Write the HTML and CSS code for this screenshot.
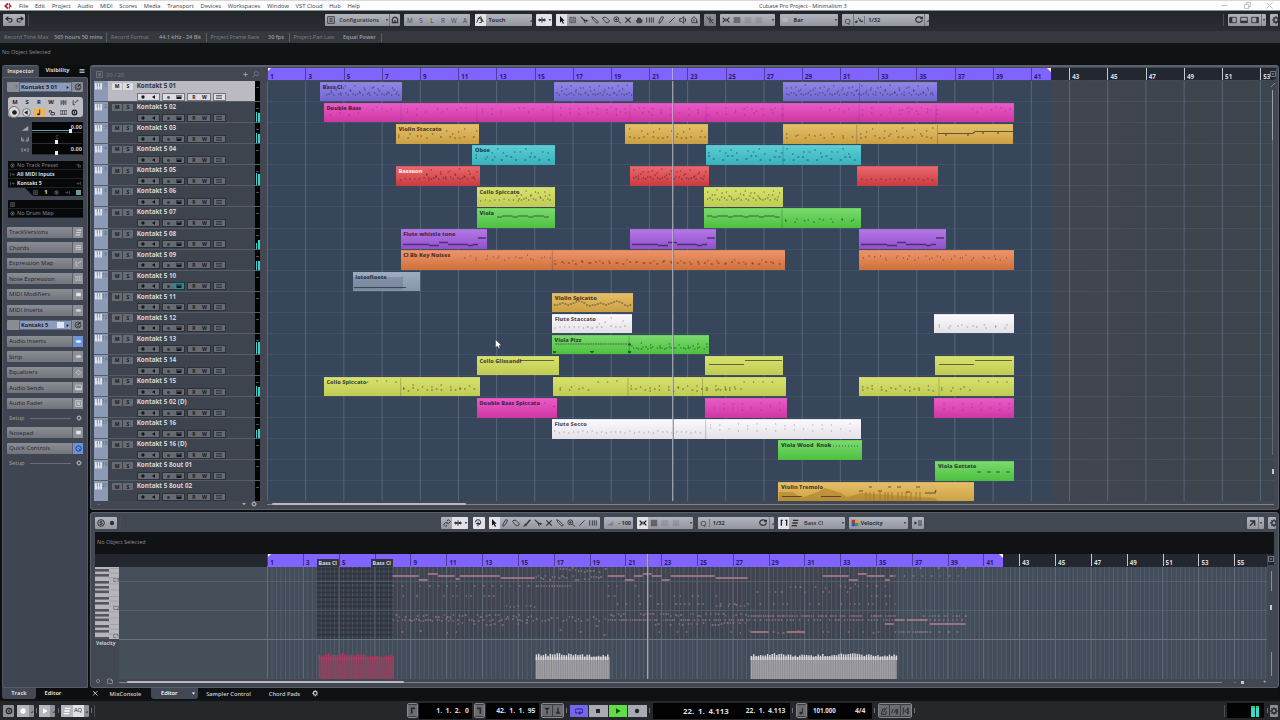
FILE: index.html
```html
<!DOCTYPE html>
<html lang="en">
<head>
    <meta charset="utf-8">
    <title>Cubase Pro Project - Minimalism 3</title>
    <link rel="stylesheet" href="styles.css">
</head>
<body>
<div class="app">

    <div class="menubar">
        <i class="logo" data-icon="logo"></i>
        <span>File</span><span>Edit</span><span>Project</span><span>Audio</span><span>MIDI</span><span>Scores</span><span>Media</span><span>Transport</span><span>Devices</span><span>Workspaces</span><span>Window</span><span>VST Cloud</span><span>Hub</span><span>Help</span>
        <b class="title">Cubase Pro Project - Minimalism 3</b>
        <div class="winbtns"><i data-icon="min"></i><i data-icon="restore"></i><i data-icon="close"></i></div>
    </div>

    <div class="toolbar">
        <div class="tb-left">
            <div class="grp undo"><i data-icon="undo"></i><i data-icon="redo"></i></div>
            <div class="sep"></div>
        </div>
        <div class="grp w75"><i data-icon="square"></i><span class="lbl grow">Configurations</span><i class="tiny" data-icon="down"></i><i class="bl" data-icon="home"></i></div>
        <div class="grp w66 letters"><span>M</span><span>S</span><span>L</span><span>R</span><span>W</span><span>A</span></div>
        <div class="grp w57"><i class="on" data-icon="auto"></i><span class="lbl grow bold">Touch</span><i class="tiny" data-icon="corner"></i></div>
        <div class="grp w16 on"><i data-icon="scroll"></i><i class="tiny" data-icon="down"></i></div>
        <div class="grp w144 tools"><i class="on" data-icon="arrow"></i><i data-icon="range"></i><i data-icon="split"></i><i data-icon="pencil"></i><i data-icon="erase"></i><i data-icon="zoom"></i><i data-icon="x"></i><i data-icon="hand"></i><i data-icon="warp"></i><i data-icon="pen"></i><i data-icon="line"></i><i data-icon="play2"></i><i data-icon="bucket"></i></div>
        <div class="grp w12 dim"><i data-icon="snap"></i></div>
        <div class="grp w55"><i data-icon="xx"></i><i data-icon="bars"></i><i class="faint" data-icon="bars"></i><i class="faint" data-icon="grid"></i><span class="grow"></span><i class="tiny" data-icon="down"></i></div>
        <div class="grp w59"><i class="faint" data-icon="block"></i><span class="lbl grow bold">Bar</span><i class="tiny" data-icon="down"></i></div>
        <div class="grp w87"><span class="q">Q</span><i class="bl" data-icon="quant"></i><span class="lbl grow bl bold">1/32</span><i data-icon="reload"></i><i class="tiny bl" data-icon="corner"></i></div>
        <div class="spacer"></div>
        <div class="sep"></div>
        <div class="grp w38"><i data-icon="zl"></i><i data-icon="zb"></i><i data-icon="zr"></i><i class="tiny bl" data-icon="down"></i></div>
        <div class="grp w8"><i data-icon="gear"></i></div>
    </div>

    <div class="statusline">
        <span style="width:50px">Record Time Max</span><b style="width:52px">365 hours 50 mins</b>
        <span class="sl" style="width:53px">Record Format</span><b style="width:46.5px">44.1 kHz - 24 Bit</b>
        <span class="sl" style="width:62.5px">Project Frame Rate</span><b style="width:20.5px">30 fps</b>
        <span class="sl" style="width:54.5px">Project Pan Law</span><b style="width:37.5px">Equal Power</b>
        <span class="sl"></span>
    </div>
    <div class="infoline">No Object Selected</div>

    <div class="main">
        <div class="left">
            <div class="tabs"><span class="active">Inspector</span><span>Visibility</span><i data-icon="menu"></i></div>
            <div class="inspector">
                <div class="namebar"><span class="num">1</span><span class="nm">Kontakt 5 01<i data-icon="right"></i></span><i data-icon="edit"></i></div>
                <div class="pad">
                    <div><i class="s">M</i><i class="s">S</i><i class="s gap">R</i><i class="s">W</i><i data-icon="lanes"></i><i data-icon="auto2"></i></div>
                    <div><i class="round" data-icon="rec"></i><i class="round sm" data-icon="spk"></i><i class="orange" data-icon="note"></i><i data-icon="lock"></i><i data-icon="cells"></i><i data-icon="ring"></i></div>
                </div>
                <div class="faders">
                    <div class="ficons"><i data-icon="ramp"></i><i data-icon="pan"></i><i data-icon="delay"></i></div>
                    <div class="fbox">
                        <div><b>0.00</b><u class="vol"></u></div>
                        <div><em>C</em><u></u></div>
                        <div><b>0.00</b><u></u></div>
                    </div>
                </div>
                <div class="routing">
                    <div class="off"><i data-icon="ring"></i>No Track Preset<i class="end" data-icon="lock"></i></div>
                    <div><i data-icon="io"></i>All MIDI Inputs</div>
                    <div><i data-icon="io"></i>Kontakt 5<i class="end" data-icon="out"></i></div>
                </div>
                <div class="channel"><i data-icon="square"></i><b>1</b><i data-icon="ring"></i><i class="lit" data-icon="out"></i><u></u></div>
                <div class="routing drum">
                    <div class="off"><i data-icon="square"></i></div>
                    <div class="off"><i data-icon="ring"></i>No Drum Map</div>
                </div>
                <div class="sections" id="sections"></div>
            </div>
            <div class="tabs bottom"><span class="active">Track</span><span>Editor</span></div>
        </div>

        <div class="right">
            <div class="project">
                <div class="tracklist">
                    <div class="tl-head"><i data-icon="square"></i><span>20 / 20</span><i class="plus" data-icon="plus"></i><i data-icon="search"></i></div>
                    <div class="rows" id="tracks"></div>
                    <div class="tl-foot"><span>-</span><i data-icon="down"></i><i data-icon="gear"></i></div>
                </div>
                <div class="arrange">
                    <div class="ruler" id="ruler"></div>
                    <div class="lanes" id="lanes"></div>
                    <div class="hscroll"><span></span></div>
                </div>
                <div class="vscroll"><i data-icon="dropbox"></i><i data-icon="line"></i><span></span><u></u></div>
            </div>

            <div class="editor">
                <div class="toolbar ed">
                    <div class="tb-left">
                        <div class="grp"><i data-icon="solo"></i><i data-icon="dot"></i></div>
                        <div class="sep"></div>
                    </div>
                    <div class="grp w27"><i data-icon="link"></i><i class="on" data-icon="scroll"></i><i class="tiny on" data-icon="down"></i></div>
                    <div class="grp w12 on"><i data-icon="speaker"></i></div>
                    <div class="grp w111 tools"><i class="on" data-icon="arrow"></i><i data-icon="pen"></i><i data-icon="erase"></i><i data-icon="brush"></i><i data-icon="split"></i><i data-icon="x"></i><i data-icon="pencil"></i><i data-icon="zoom"></i><i data-icon="line"></i><i data-icon="warp"></i></div>
                    <div class="grp w29"><i class="faint" data-icon="ramp"></i><span class="lbl grow bold rt">- 100</span><i class="tiny" data-icon="updn"></i></div>
                    <div class="grp w56"><i class="on" data-icon="xx"></i><i data-icon="grid"></i><i class="faint" data-icon="bars"></i><i class="faint" data-icon="grid"></i><span class="grow"></span><i class="tiny" data-icon="down"></i></div>
                    <div class="grp w76"><span class="q">Q</span><span class="lbl grow bl bold">1/32</span><i data-icon="reload"></i><i class="tiny bl" data-icon="corner"></i></div>
                    <div class="grp w67"><i class="on" data-icon="parts"></i><i data-icon="layers"></i><span class="lbl grow pl">Bass Cl</span><i class="tiny" data-icon="down"></i></div>
                    <div class="grp w59"><i data-icon="colors"></i><span class="lbl grow tight">Velocity</span><i class="tiny" data-icon="down"></i></div>
                    <div class="grp w12"><i data-icon="indent"></i></div>
                    <div class="spacer"></div>
                    <div class="sep"></div>
                    <div class="grp w17"><i data-icon="popout"></i><i class="tiny bl" data-icon="down"></i></div>
                    <div class="grp w8"><i data-icon="gear"></i></div>
                </div>
                <div class="ed-info">No Object Selected</div>
                <div class="ed-body">
                    <div class="keys-col">
                        <div class="keys-top"></div>
                        <div class="keys" id="keys"></div>
                        <div class="vel-label">Velocity</div>
                        <div class="keys-foot"><i data-icon="diamond"></i><i data-icon="page"></i></div>
                    </div>
                    <div class="ed-canvas">
                        <div class="ruler ed-ruler" id="edRuler"></div>
                        <div class="roll" id="roll"></div>
                        <div class="hscroll wide"><span></span><em>- <u></u> +</em></div>
                    </div>
                    <div class="vscroll short"><i data-icon="dropbox"></i><span></span><u></u><span class="low"></span></div>
                </div>
            </div>

            <div class="zonetabs">
                <i data-icon="x"></i><span class="t1">MixConsole</span><span class="active">Editor<i data-icon="down"></i></span><span class="t3">Sampler Control</span><span class="t4">Chord Pads</span><i data-icon="gear"></i>
            </div>
        </div>
    </div>

    <div class="transport">
        <div class="tp-left">
            <div class="tb g11"><i data-icon="ring"></i></div>
            <div class="tb g17"><i class="w" data-icon="rec"></i><i class="tiny" data-icon="corner"></i></div><s></s>
            <div class="tb g16"><i class="w" data-icon="play"></i><i class="tiny" data-icon="corner"></i></div><s></s>
            <div class="tb g28"><i class="w" data-icon="layers"></i><span>AQ</span><i class="tiny" data-icon="corner"></i></div><s></s><s class="tall"></s>
        </div>
        <div class="dark g11"><i data-icon="flagr"></i></div>
        <div class="time g53">1.&ensp;1.&ensp;2.&ensp;&thinsp;0</div>
        <div class="dark g11"><i data-icon="flag"></i></div>
        <div class="time g53">42.&ensp;1.&ensp;1.&ensp;95</div>
        <div class="dark g23"><i data-icon="punchin"></i><i data-icon="punchout"></i></div><s></s>
        <div class="play"><i class="cyc" data-icon="cycle"></i><i data-icon="stop"></i><i class="go" data-icon="play"></i><i data-icon="dot"></i></div><s></s>
        <div class="time g138"><span class="big">22.&ensp;1.&ensp;4.113</span><span class="sub">22.&ensp;1.&ensp;4.113</span></div><s></s>
        <div class="dark g11"><i data-icon="note"></i></div>
        <div class="time g66"><span class="tempo">101.000</span><span class="sig">4/4</span></div><s></s>
        <div class="dark g34"><i data-icon="metro"></i><i data-icon="count"></i><i data-icon="click"></i></div><s></s>
        <div class="spacer"></div>
        <s class="tall"></s>
        <div class="outmeter"><u></u><u></u></div><s></s>
        <div class="tb g8"><i data-icon="gear"></i></div>
    </div>
</div>
<script src="script.js"></script>
</body>
</html>
```

FILE: styles.css
```css
* {
    box-sizing: border-box;
}

body {
    margin: 0;
    background: #0d0e10;
    font-family: "Open Sans", "Noto Sans", sans-serif;
    font-size: 5.8px;
    color: #c9ccd2;
    overflow: hidden;
}

i, em, u, s {
    font-style: normal;
    text-decoration: none;
}

i {
    display: flex;
    align-items: center;
    justify-content: center;
    flex: none;
}

i svg {
    width: 8px;
    height: 8px;
    display: block;
}

.app {
    width: 1280px;
    height: 720px;
    display: flex;
    flex-direction: column;
    white-space: nowrap;
}

.spacer, .grow {
    flex: 1;
}

/* menu */
.menubar {
    height: 11px;
    flex: none;
    background: #fdfdfd;
    border-top: 1px solid #d8d8da;
    border-bottom: 1px solid #8b8c90;
    color: #3c3c40;
    display: flex;
    align-items: center;
    font-size: 5.8px;
    position: relative;
}

.menubar span {
    margin-right: 6.7px;
}

.logo {
    width: 15px;
    margin-right: 4px;
}

.title {
    position: absolute;
    left: 759px;
    font-weight: normal;
    font-size: 5.5px;
}

.winbtns {
    margin-left: auto;
    display: flex;
    gap: 15.5px;
    padding-right: 7px;
    color: #aaa;
}

.winbtns svg {
    width: 7px;
    height: 7px;
}

/* toolbars */
.toolbar {
    height: 20px;
    flex: none;
    background: linear-gradient(#23262b, #2a2d35);
    display: flex;
    align-items: center;
    gap: 4.2px;
    padding: 0 2px 2px 3px;
}

.tb-left {
    display: flex;
    width: 318px;
    gap: 3px;
}

.grp {
    height: 12px;
    display: flex;
    align-items: center;
    flex: none;
    background: linear-gradient(#b3b5be, #94969f);
    color: #2e3036;
    border-radius: 1px;
    overflow: hidden;
}

.grp i {
    width: 11px;
    height: 12px;
}

.grp .tiny {
    width: 5px;
}

.grp .tiny svg {
    width: 4px;
    height: 4px;
}

.grp .on, .grp.on {
    background: #e2e2e8;
    color: #141416;
}

.grp .bl {
    border-left: 1px solid #747680;
}

.grp .lbl {
    padding-left: 3px;
    font-weight: 600;
    font-size: 5.6px;
}

.grp .bold {
    font-weight: 700;
}

.grp .lbl.rt {
    text-align: right;
    padding-right: 2px;
}

.grp .lbl.pl {
    padding-left: 4px;
}

.grp .lbl.tight {
    padding-left: 0;
    font-weight: 700;
}

.grp .q {
    width: 11px;
    text-align: center;
    font-size: 8px;
}

.faint {
    opacity: .25;
}

.dim {
    opacity: .75;
}

.letters span {
    width: 11px;
    text-align: center;
    font-size: 6.3px;
    color: #44464e;
}

.sep {
    width: 1px;
    height: 12px;
    background: #4a4d55;
}

.w8 { width: 8px; }
.w12 { width: 12px; }
.w16 { width: 16px; }
.w17 { width: 17px; }
.w27 { width: 27px; }
.w29 { width: 29px; }
.w38 { width: 38px; }
.w55 { width: 55px; }
.w56 { width: 56px; }
.w57 { width: 57.5px; }
.w59 { width: 58.5px; }
.w66 { width: 66px; }
.w67 { width: 67px; }
.w75 { width: 75px; }
.w76 { width: 76px; }
.w87 { width: 87px; }
.w111 { width: 111px; }
.w144 { width: 143.500px; }

.statusline {
    height: 12px;
    flex: none;
    background: #35383d;
    display: flex;
    align-items: center;
    padding-left: 4px;
    font-size: 5.5px;
    color: #7e8188;
}

.statusline span, .statusline b {
    flex: none;
}

.statusline b {
    font-weight: 600;
    color: #9b9ea4;
}

.statusline .sl {
    height: 9px;
    line-height: 8px;
    border-left: 1px solid #5a5d63;
    padding-left: 4px;
}

.infoline {
    height: 22px;
    flex: none;
    background: #111213;
    color: #8d8f94;
    font-size: 5.5px;
    line-height: 19px;
    padding-left: 2px;
}

.main {
    height: 634px;
    flex: none;
    display: flex;
    gap: 2px;
    padding: 0 1px 0 2px;
}

/* left zone */
.left {
    width: 86px;
    display: flex;
    flex-direction: column;
}

.tabs {
    height: 12px;
    display: flex;
    font-size: 5.6px;
    font-weight: 700;
    color: #d6d8dc;
    background: #0d0e10;
}

.tabs span {
    width: 37px;
    text-align: center;
    line-height: 11px;
}

.tabs .active {
    background: #424955;
    border-radius: 3px 3px 0 0;
    border-top: 1px solid #5b616d;
}

.tabs.bottom {
    height: 11px;
}

.tabs.bottom span {
    width: 34px;
    line-height: 11px;
}

.tabs.bottom .active {
    border-radius: 0 0 3px 3px;
    border-top: 0;
}

.tabs i {
    width: 8px;
    margin-left: auto;
    margin-right: 2px;
}

.tabs i svg {
    width: 6px;
    height: 6px;
}

.inspector {
    flex: 1;
    background: #404651;
    border: 1px solid #555b67;
    border-radius: 0 2px 0 0;
    padding: 4px 4px 0 4px;
}

.namebar {
    display: flex;
    height: 10px;
    background: #8b8d95;
    border-radius: 1px;
    color: #1e222c;
    align-items: center;
}

.namebar .num {
    width: 12px;
    text-align: right;
    padding-right: 1px;
    color: #555;
}

.namebar .nm {
    flex: 1;
    height: 10px;
    line-height: 8px;
    font-size: 5.8px;
    font-weight: 700;
    background: #8d9cba;
    border: 1px solid #5e6a82;
    padding-left: 1px;
    display: flex;
}

.namebar .nm i {
    width: 7px;
    margin-left: auto;
}

.namebar .nm svg {
    width: 5px;
    height: 5px;
}

.namebar i {
    width: 11px;
}

.pad {
    margin: 5px 0 0 1px;
    height: 20px;
    background: #bdbdc6;
    border-radius: 3px;
    color: #1d1e22;
}

.pad div {
    display: flex;
    height: 10px;
    align-items: center;
    justify-content: space-between;
    padding: 0 3px 0 2px;
}

.pad i {
    width: 10px;
    height: 9px;
}

.pad .s {
    font-size: 5.8px;
    font-weight: 700;
}

.pad svg {
    width: 7px;
    height: 7px;
}

.pad .round {
    width: 12px;
    height: 12px;
    border: 1px solid #777;
    border-radius: 50%;
    background: #d6d6dc;
    margin-left: -2px;
}

.pad .round.sm {
    width: 9px;
    height: 9px;
    margin: 0;
}

.pad .orange {
    background: #e9b45c;
    width: 12px;
}

.faders {
    display: flex;
    margin-top: 5px;
    height: 33px;
}

.ficons {
    width: 25px;
    color: #a0a3aa;
    padding-left: 10px;
}

.ficons i {
    height: 11px;
}

.fbox {
    flex: 1;
    background: #050506;
    padding-right: 1px;
}

.fbox div {
    height: 11px;
    position: relative;
    border-bottom: 1px solid #2c2e33;
    text-align: right;
    line-height: 10px;
    color: #c9cbd0;
}

.fbox b {
    font-size: 5.6px;
}

.fbox em {
    display: block;
    text-align: center;
    font-size: 5px;
    line-height: 9px;
    color: #777;
}

.fbox u {
    position: absolute;
    left: 23px;
    bottom: -1px;
    width: 3px;
    height: 4px;
    background: #eee;
}

.fbox .vol {
    left: 37px;
}

.fbox .vol::before {
    content: "";
    position: absolute;
    left: -37px;
    top: 1px;
    width: 37px;
    height: 1px;
    background: #4fa9c0;
}

.routing {
    margin: 6px 0 0 1px;
    background: #07080a;
    color: #d9dbdf;
    font-weight: 700;
    font-size: 5.1px;
}

.routing div {
    height: 9px;
    display: flex;
    align-items: center;
    border-bottom: 1px solid #1f2126;
}

.routing i {
    width: 9px;
    color: #777a80;
}

.routing svg, .channel svg {
    width: 5px;
    height: 5px;
}

.routing .end {
    margin-left: auto;
}

.routing .off {
    color: #6f7278;
    font-weight: 600;
    font-size: 5.4px;
}

.channel {
    height: 8px;
    margin-left: 18px;
    background: #07080a;
    clip-path: polygon(0 0, 100% 0, 100% 100%, 8px 100%);
    display: flex;
    align-items: center;
    justify-content: space-between;
    padding: 0 2px 0 8px;
    color: #777a80;
}

.channel b {
    color: #e8e8ea;
}

.channel u {
    width: 5px;
    height: 5px;
    background: #6d9c98;
}

.routing.drum {
    margin-top: 4px;
    margin-bottom: 6.5px;
}

.sections > div {
    height: 15.55px;
    display: flex;
    align-items: center;
}

.sec {
    height: 11px;
    flex: 1;
    display: flex;
    align-items: center;
    background: linear-gradient(#8b8d95, #72747c);
    border-radius: 1px;
    color: #212329;
    font-size: 6px;
    padding-left: 2px;
}

.sec i {
    margin-left: auto;
    width: 11px;
    height: 11px;
    color: #d2d4d8;
    background: #8d8f96;
    border-left: 1px solid #5d5f67;
}

.sec .blue {
    background: #6c93d8;
    color: #e8efff;
}

.sec svg {
    width: 7px;
    height: 7px;
}

.sections .setup {
    height: 14px;
    color: #a1a4aa;
    gap: 5px;
    padding: 0 1px 0 2px;
}

.setup::before {
    content: "Setup";
}

.setup svg {
    width: 6px;
    height: 6px;
}

.setup u {
    flex: 1;
    height: 1px;
    background: #6a6e76;
}

.sections .namebar {
    height: 10px;
    margin: 2.7px 0 2.8px;
}

.sections .nm {
    font-size: 5.6px;
}

.sections .blk {
    margin: 1px 0 0 auto;
    width: 6px;
    height: 6px;
    background: #dfe6f2;
}

.sections .nm .blk + i {
    margin-left: 0;
}

/* right zone */
.right {
    flex: 1;
    min-width: 0;
    display: flex;
    flex-direction: column;
}

.project {
    height: 445px;
    flex: none;
    display: flex;
    background: #424751;
    border: 1px solid #5b616c;
    border-top-width: 2px;
    border-radius: 3px;
    padding: 1px 0 0 3px;
}

.tracklist {
    width: 166.3px;
    flex: none;
}

.tl-head {
    height: 13px;
    display: flex;
    align-items: center;
    color: #777c86;
    gap: 3px;
    padding: 0 1px 0 2px;
}

.tl-head span {
    flex: 1;
}

.tl-head .plus {
    color: #a8abb2;
}

.tl-head svg {
    width: 7px;
    height: 7px;
}

.rows {
    height: 419.7px;
    overflow: hidden;
}

.track {
    height: 21.09px;
    display: flex;
    border-bottom: 1px solid #565b66;
    background: #3e444e;
}

.tnum {
    width: 14px;
    background: #8c9ab5;
    color: #5b6780;
    display: flex;
    font-size: 4.8px;
    line-height: 9px;
    justify-content: space-between;
    padding-right: 1px;
}

.tnum i {
    height: 10px;
    width: 8px;
    color: #e1e6ef;
}

.tnum svg {
    width: 7px;
    height: 7px;
}

.ms {
    width: 28.7px;
    padding: 1.5px 0 0 4px;
    display: flex;
    gap: 1px;
}

.ms i, .ctl i {
    height: 7.5px;
    width: 10px;
    background: #666a73;
    color: #15171b;
    font-size: 5px;
    font-weight: 700;
}

.tbody {
    flex: 1;
}

.tname {
    font-size: 6.3px;
    line-height: 9.5px;
    height: 11.5px;
    font-weight: 700;
    color: #d3d5da;
}

.ctl {
    display: flex;
    gap: 2px;
}

.ctl span {
    display: flex;
    border: 1px solid #2c3038;
}

.ctl i {
    height: 6px;
    width: 10.7px;
}

.ctl svg {
    width: 6px;
    height: 6px;
}

.ctl .teal {
    background: #1e8f9b;
}

.meter {
    width: 5px;
    background: #020303;
    display: flex;
    align-items: flex-end;
    gap: 1px;
    justify-content: center;
    position: relative;
}

.meter::before {
    content: "";
    position: absolute;
    top: 6px;
    left: 1px;
    width: 3px;
    height: 1px;
    background: #4b5157;
}

.meter u {
    width: 1.6px;
    background: #2fd5cf;
}

.track.sel {
    background: #bbb9c2;
}

.sel .tname {
    color: #33353b;
}

.sel .ms i, .sel .ctl i {
    background: #dddce2;
}

.sel .ctl span {
    border-color: #75757e;
}

.tl-foot {
    height: 7px;
    display: flex;
    align-items: center;
    color: #a2a5ac;
    gap: 4px;
    padding-right: 3px;
}

.tl-foot span {
    flex: 1;
    padding-left: 4px;
}

.tl-foot svg {
    width: 6px;
    height: 6px;
}

.arrange {
    width: 1007px;
    margin-left: 7px;
    flex: none;
    overflow: hidden;
}

.ruler {
    height: 12px;
    position: relative;
    background: #23272f;
    overflow: hidden;
}

.ruler .loop {
    position: absolute;
    left: 0;
    top: 0;
    height: 100%;
    background: #8163fd;
}

.ruler .loop::before, .ruler .loop::after {
    content: "";
    position: absolute;
    top: 0;
    left: 0;
    border-top: 4px solid #fff;
    border-right: 4px solid transparent;
}

.ruler .loop::after {
    left: auto;
    right: 0;
    border-right: 0;
    border-left: 4px solid transparent;
}

.ruler span {
    position: absolute;
    top: 0;
    height: 12px;
    border-left: 1px solid #c5c8cf;
    padding-left: 2px;
    font-size: 6.2px;
    font-weight: 700;
    line-height: 17px;
    color: #d8dade;
}

.ruler .in {
    border-left-color: #4b3ba6;
    color: #281d69;
}

.ruler em {
    position: absolute;
    z-index: 2;
    bottom: 0;
    height: 8px;
    line-height: 8px;
    width: 22px;
    text-align: center;
    background: #33363e;
    color: #d8dade;
    font-size: 5.3px;
    font-weight: 700;
}

.cursor {
    position: absolute;
    top: 0;
    bottom: 0;
    width: 2px;
    border-left: 1px solid #c3c6ce;
    border-right: 1px solid #70757f;
    opacity: .7;
    z-index: 3;
}

.lanes {
    height: 419.7px;
    margin-top: 1px;
    position: relative;
    overflow: hidden;
    background: linear-gradient(90deg, #37465a 784px, #41454f 784px, #3c444d);
}

.grid {
    position: absolute;
    left: 0;
    top: 0;
}

.lane {
    height: 21.09px;
    position: relative;
    border-bottom: 1px solid rgba(120, 140, 160, .16);
}

.clip {
    position: absolute;
    top: .8px;
    height: 19.6px;
    font-size: 5.6px;
    font-weight: 700;
    line-height: 8px;
    color: rgba(15, 15, 25, .72);
    overflow: hidden;
    border-top: 1px solid rgba(255, 255, 255, .18);
}

.clip b {
    position: absolute;
    left: 2.5px;
    top: 0;
}

.clip svg {
    position: absolute;
    left: 0;
    top: -1px;
}

.c-blue { background: linear-gradient(#9184e6, #6f66cf); }
.c-pink { background: linear-gradient(#e85ac6, #cf36a2); }
.c-gold { background: linear-gradient(#e4be66, #cba043); }
.c-cyan { background: linear-gradient(#5acdd5, #38b2bd); }
.c-red { background: linear-gradient(#e8676a, #cb3a41); color: #ffe3e3; }
.c-lime { background: linear-gradient(#d7e26e, #bfcb51); }
.c-green { background: linear-gradient(#78da6c, #4dc040); }
.c-violet { background: linear-gradient(#b277e5, #934fcd); }
.c-orange { background: linear-gradient(#ec9468, #d0703b); }
.c-steel { background: linear-gradient(#9dabbe, #8695ab); }
.c-white { background: linear-gradient(#fbf9fc, #e4e1e7); }

.mouse {
    position: absolute;
    left: 228px;
    top: 258px;
    width: 7px;
    height: 10px;
    z-index: 4;
}

.hscroll {
    height: 7px;
    display: flex;
    align-items: center;
    background: linear-gradient(#424751 3px, #80848c 3px, #80848c 4px, #424751 4px);
}

.hscroll span {
    width: 194px;
    height: 2.4px;
    margin-left: 5px;
    background: #b6b9c0;
    border-radius: 1px;
}

.vscroll {
    flex: 1;
    display: flex;
    flex-direction: column;
    align-items: center;
    margin-left: -7px;
    z-index: 3;
    color: #a3a6ad;
}

.vscroll i {
    height: 11px;
    background: #23272f;
}

.vscroll i + i {
    background: none;
}

.vscroll svg {
    width: 6px;
    height: 6px;
}

.vscroll span {
    width: 1px;
    height: 365px;
    background: linear-gradient(#9b9fa7 50px, #646a74 50px);
}

.vscroll u {
    width: 2px;
    height: 5px;
    background: #c6c8cd;
    margin-top: 14px;
}

/* lower zone */
.editor {
    margin-top: 2px;
    height: 176px;
    flex: none;
    background: #424852;
    border: 1px solid #5b616c;
    border-radius: 3px;
    padding-left: 4px;
    display: flex;
    flex-direction: column;
}

.toolbar.ed {
    background: none;
    height: 19px;
    padding: 0 2px 0 0;
    gap: 4.3px;
}

.ed .tb-left {
    width: 342px;
}

.ed-info {
    height: 21.5px;
    flex: none;
    background: #111213;
    color: #8d8f94;
    font-size: 5.5px;
    line-height: 20px;
    padding-left: 2px;
    margin-right: 4px;
}

.ed-body {
    flex: 1;
    display: flex;
}

.keys-col {
    width: 24.3px;
    flex: none;
}

.keys-top {
    height: 13px;
    background: #23262e;
}

.keys {
    height: 72px;
    background: #b6b5bc;
}

.keys svg {
    display: block;
}

.vel-label {
    font-size: 4.9px;
    font-weight: 700;
    line-height: 8px;
    height: 39px;
    padding-left: 1px;
}

.keys-foot {
    display: flex;
    gap: 6px;
    color: #9fa2a9;
}

.keys-foot svg {
    width: 6px;
    height: 6px;
}

.ed-canvas {
    width: 1148px;
    flex: none;
}

.ed-ruler {
    height: 13px;
}

.roll {
    height: 112px;
    position: relative;
    overflow: hidden;
    background: #444f59;
}

.roll svg {
    display: block;
}

.hscroll.wide {
    height: 7px;
}

.hscroll.wide span {
    width: 277px;
    margin-left: 8px;
}

.hscroll em {
    margin-left: auto;
    background: #424852;
    display: flex;
    gap: 5px;
    align-items: center;
    padding: 0 1px 0 12px;
    line-height: 6px;
}

.hscroll u {
    width: 3px;
    height: 3px;
    background: #c6c8cd;
    margin-right: 14px;
}

.vscroll.short {
    margin-left: -3px;
}

.short span {
    height: 20px;
    margin-top: 6px;
    background: #8b9098;
}

.short .low {
    height: 24px;
    margin-top: 42px;
}

.zonetabs {
    height: 11px;
    display: flex;
    align-items: center;
    font-size: 5.7px;
    font-weight: 600;
    background: #0f1012;
}

.zonetabs i {
    width: 10px;
}

.zonetabs svg {
    width: 6.5px;
    height: 6.5px;
}

.zonetabs .t1 {
    width: 51px;
    text-align: center;
}

.zonetabs .active {
    width: 47px;
    height: 11px;
    line-height: 11px;
    background: #424955;
    border-radius: 0 0 3px 3px;
    padding-left: 10px;
    display: flex;
    justify-content: space-between;
    color: #fff;
}

.zonetabs .active svg {
    width: 5px;
}

.zonetabs .t3 {
    width: 61px;
    text-align: center;
}

.zonetabs .t4 {
    width: 51px;
    text-align: center;
}

/* transport */
.transport {
    height: 21px;
    flex: none;
    background: #25272b;
    border-top: 2px solid #111214;
    display: flex;
    align-items: center;
    padding: 0 2px 0 3px;
}

.tp-left {
    width: 404px;
    display: flex;
    align-items: center;
}

.tb, .dark {
    height: 12px;
    display: flex;
    align-items: center;
    justify-content: center;
    background: #8e9097;
    border-radius: 1px;
    color: #25272b;
    margin-right: 2.5px;
    flex: none;
}

.tb i.w {
    color: #fff;
    background: #b4b6bd;
    height: 12px;
    flex: 1;
}

.tb span {
    background: #dedfe3;
    height: 12px;
    width: 11px;
    line-height: 11px;
    text-align: center;
}

.tb .tiny {
    width: 5px;
}

.tb .tiny svg {
    width: 4px;
}

.dark {
    height: 15px;
    border: 1px solid #85878d;
    background: #3a3c41;
    border-radius: 2px;
    margin: 0;
    gap: 1px;
}

.dark i {
    height: 11px;
    flex: 1;
    background: #6a6c72;
}

.transport s {
    width: 1px;
    height: 5px;
    background: #6f7278;
    margin: 0 2.5px;
    flex: none;
}

.tp-left s {
    margin: 0 2px 0 0;
}

.transport .tall {
    height: 12px;
    background: #4a4d54;
}

.time {
    height: 16px;
    background: #030304;
    color: #dddee2;
    font-size: 6.8px;
    font-weight: 700;
    display: flex;
    align-items: center;
    justify-content: flex-end;
    padding-right: 3px;
    flex: none;
    margin: 0 1.5px 0 1px;
}

.time .big {
    font-size: 7.8px;
}

.time .sub {
    margin-left: 17px;
}

.time .tempo {
    font-size: 6.2px;
}

.time .sig {
    margin-left: 19px;
}

.g8 { width: 8px; margin: 0; }
.g11 { width: 11px; }
.g16 { width: 16px; }
.g17 { width: 17px; }
.g23 { width: 22.5px; margin-left: 1px; }
.g28 { width: 28px; }
.g34 { width: 34px; }
.g53 { width: 53px; }

.g66 {
    width: 64px;
    padding-right: 6px;
    margin-right: 0;
}

.g138 {
    width: 137px;
    padding-right: 4px;
    margin: 0;
}

.play {
    display: flex;
    gap: 1px;
}

.play i {
    width: 18.5px;
    height: 12px;
    background: #a9abb3;
    color: #222429;
}

.play .cyc {
    background: #7565ea;
    color: #2c2290;
}

.play .go {
    background: #5fdf45;
    color: #124d08;
}

.outmeter {
    width: 37px;
    height: 15px;
    background: #030304;
    display: flex;
    gap: 1px;
    align-items: flex-end;
    justify-content: flex-end;
    padding: 0 5px 1px 0;
}

.outmeter u {
    width: 3.5px;
    height: 11px;
    background: linear-gradient(#35c56d 2px, #36dcc9 2px);
}
```

FILE: script.js
```js
// icons, drawn on a 12x12 box
const S = 'fill="none" stroke="currentColor" stroke-width="1.3"';
const F = 'fill="currentColor"';
const icons = {
    logo: '<path d="M5 1 0 6l5 5 2-2-3-3 3-3z" fill="#c8203c"/><path d="M8 2v3h3M8 10V7h3" fill="none" stroke="#7c1830" stroke-width="1.5"/>',
    min: `<path d="M1 6h10" ${S}/>`,
    restore: `<path d="M1 4h7v7H1zM4 4V1h7v7H8" ${S}/>`,
    close: `<path d="M1 1l10 10M11 1 1 11" ${S}/>`,
    undo: `<path d="M3 4h5a2.5 2.5 0 0 1 0 5H5" fill="none" stroke="currentColor" stroke-width="1.8"/><path d="M5 0v8L0 4z" ${F}/>`,
    redo: `<path d="M9 4H4a2.500 2.500 0 0 0 0 5h3" fill="none" stroke="currentColor" stroke-width="1.8"/><path d="M7 0v8l5-4z" ${F}/>`,
    square: `<path d="M1 1h10v10H1zM3.500 4h5M3.500 6h5M3.500 8h5" ${S}/>`,
    home: `<path d="M2 10V5l2-3h4l2 3v5z" fill="none" stroke="currentColor" stroke-width="1.8"/><path d="M5 10V7h2v3" ${S}/>`,
    down: `<path d="M2 4h8L6 9z" ${F}/>`,
    right: `<path d="M4 2v8l5-4z" ${F}/>`,
    updn: `<path d="M3 4l3-3 3 3zM3 8l3 3 3-3z" ${F}/>`,
    corner: `<path d="M11 5v6H5z" ${F}/>`,
    auto: `<path d="M1 10 4 3l3 1 2 5-4 1M4 3l3-2 4 8" ${S}/>`,
    auto2: `<path d="M2 2v8h3M5 7l3-4h3" ${S}/>`,
    scroll: `<path d="M0 6h12M6 2v8" ${S}/><path d="M2 3.500 5 6 2 8.500zM10 3.500 7 6l3 2.500z" ${F}/>`,
    arrow: `<path d="M3 0v10l2.500-2 2 4 1.500-1-2-4h3z" ${F}/>`,
    range: '<path d="M1 2h9v8H1z" fill="currentColor" opacity=".35"/><path d="M1 2h9v8H1z" fill="none" stroke="currentColor" stroke-dasharray="1.500 1"/>',
    split: `<path d="M1 2l8 5M2 1l4 6 5 0M6 6l2 5" ${S}/><circle cx="10" cy="7" r="1.500" ${F}/>`,
    pencil: `<path d="M1 1l2 4 6 6 2-2-6-6z" ${S}/>`,
    pen: `<path d="M3 11V8l4-7 3 1-4 7z" ${S}/>`,
    brush: `<path d="M1 11l3-4 2 2zM5 7l5-6 1 1-5 6z" ${F} stroke="currentColor"/>`,
    erase: `<path d="M1 4q0-2 2-2l3 0 5 5q0 3-3 3H6z" ${S}/>`,
    zoom: `<circle cx="5" cy="5" r="3.700" ${S}/><path d="M5 3v4M3 5h4M8 8l4 3" ${S}/>`,
    search: `<circle cx="7.500" cy="4.500" r="3.500" ${S}/><path d="M5 7l-4 4" ${S}/>`,
    x: '<path d="M2 2l8 8M10 2l-8 8" fill="none" stroke="currentColor" stroke-width="1.700"/>',
    hand: `<path d="M3 11 1 6l2 0V3h2V2h2v1h2v2h2v4l-2 2z" ${F} opacity=".85"/>`,
    warp: `<path d="M1 2v8M5 2v8M8 2v8M11 2v8" ${S}/>`,
    line: `<path d="M2 10l8-8" ${S}/>`,
    play2: `<path d="M1 4h3l3-3v10L4 8H1zM9 3q2 3 0 6" ${S}/>`,
    bucket: `<path d="M2 5l4-4 4 4v5H3zM6 4v4M10 7l1 4" ${S}/>`,
    snap: `<path d="M1 1l4 5h6M6 1v10M7 7l4 4" ${S}/>`,
    xx: '<path d="M1 2.500 4.500 6 1 9.500M11 2.500 7.500 6l3.500 3.500" fill="none" stroke="currentColor" stroke-width="1.700"/><path d="M6 3v6" stroke="currentColor"/>',
    bars: '<path d="M1 3h10M1 6h10M1 9h10" fill="none" stroke="currentColor" stroke-width="1.500"/>',
    grid: '<path d="M1 3h10M1 6h10M1 9h10M3 1v10M6 1v10M9 1v10" fill="none" stroke="currentColor"/>',
    block: '<path d="M2 3h8v6H2z" fill="#e4e5e9"/>',
    quant: `<path d="M0 9h2.500l1-2M5 4l1-1M7 5l1.500 3M9 8h3" fill="none" stroke="currentColor" stroke-width="2"/>`,
    reload: '<path d="M10 3a5 4 0 1 0 1 3M8 4h3V1" fill="none" stroke="currentColor" stroke-width="1.800"/>',
    zl: `<path d="M1 2h10v8H1z" ${S}/><path d="M1 2h4v8H1z" ${F}/>`,
    zb: `<path d="M1 2h10v8H1z" ${S}/><path d="M1 7h10v3H1z" ${F}/>`,
    zr: `<path d="M1 2h10v8H1z" ${S}/><path d="M8 2h3v8H8z" ${F}/>`,
    gear: '<circle cx="6" cy="6" r="3.300" fill="none" stroke="currentColor" stroke-width="2.200"/><path d="M6 0v2M6 10v2M0 6h2M10 6h2M2 2l1 1M9 9l1 1M10 2 9 3M3 9l-1 1" stroke="currentColor" stroke-width="1.500"/>',
    menu: '<path d="M1 3h10M1 6h10M1 9h10" stroke="currentColor" stroke-width="1.600"/>',
    edit: '<circle cx="6" cy="6" r="4.500" fill="none" stroke="currentColor"/><path d="M3 7q3-5 6-3M4 8h5M10 1 6 6" fill="none" stroke="currentColor"/>',
    lanes: `<path d="M2 2v8M10 2v8M5 3h2v6H5z" ${S}/>`,
    rec: `<circle cx="6" cy="6" r="4" ${F}/>`,
    dot: `<circle cx="6" cy="6" r="3.300" ${F}/>`,
    pill: '<path d="M3 4h6l2 2-2 2H3L1 6z" fill="currentColor"/>',
    spk: `<path d="M2 6l6-4v8z" ${F}/>`,
    note: '<path d="M8 1v8" stroke="currentColor" stroke-width="1.400"/><ellipse cx="6" cy="9" rx="2.500" ry="1.800" fill="currentColor"/>',
    lock: `<path d="M5 6h6v4H5zM6 6V3H2v3" ${S}/>`,
    cells: '<path d="M0 3h12v6H0zM4 3v6M8 3v6" fill="none" stroke="currentColor"/>',
    ring: '<circle cx="6" cy="6" r="4" fill="none" stroke="currentColor" stroke-width="2"/><path d="M5 4h2v4H5z" fill="currentColor"/>',
    knob: '<circle cx="6" cy="6" r="4.500" fill="none" stroke="#1c3f86" stroke-width="1.600"/><path d="M6 6l4 4" stroke="#1c3f86" stroke-width="1.600"/>',
    ramp: `<path d="M1 10h10V3z" ${F}/>`,
    pan: `<path d="M1 3v6h4M11 3v6H7M3 5v4M9 5v4" ${S}/>`,
    delay: `<path d="M2 3q-2 3 0 6M10 3q2 3 0 6M6 4v4M4 6h4" ${S}/>`,
    io: `<path d="M1 2v8M4 6h6M7 3l3 3-3 3" ${S}/>`,
    out: `<path d="M1 6h6M5 3l3 3-3 3M11 2v8" ${S}/>`,
    plus: `<path d="M6 2v8M2 6h8" ${S}/>`,
    dropbox: `<path d="M1 1h10v10H1z" ${S}/><path d="M3 5h6L6 8z" ${F}/>`,
    piano: `<path d="M0 0h3v6h1v5H0zM5 0h2v6h1v5H5V6zM9 0h3v11H9z" ${F}/>`,
    keysw: `<path d="M1 2h2v4h2V2h2v4h2V2h2v8H1z" ${F}/>`,
    solo: '<circle cx="6" cy="6" r="5" fill="none" stroke="currentColor" stroke-width="1.500"/><path d="M8 4H4.500v2h3v2H4" fill="none" stroke="currentColor" stroke-width="1.500"/>',
    link: '<path d="M5.500 6.500l1-1M6 9l-2 2-3-3 3-3 2 1M6 3l2-2 3 3-3 3-2-1" fill="none" stroke="currentColor" stroke-width="1.400"/>',
    speaker: `<path d="M2 5q0-4 4-4t4 4-3 3M6 4v7M3 7h6" ${S}/>`,
    parts: `<path d="M2 10V2M1 2h3M10 10V2M8 2h3" fill="none" stroke="currentColor" stroke-width="1.800"/>`,
    layers: `<path d="M3 1h8v2H3zM2 5h8v2H2zM1 9h8v2H1z" ${F}/>`,
    colors: '<path d="M1 1h5v5H1z" fill="#b33"/><path d="M6 1h5v5H6z" fill="#e0a030"/><path d="M1 6h5v5H1z" fill="#3355b8"/><path d="M6 6h5v5H6z" fill="#3a9a4a"/>',
    indent: `<path d="M0 6h4M6 3h6M6 6h6M6 9h6" ${S}/><path d="M1 3v6l3-3z" ${F}/>`,
    popout: '<path d="M3 3h7v7M10 3 3 10" fill="none" stroke="currentColor" stroke-width="2"/>',
    diamond: `<path d="M6 2l4 4-4 4-4-4z" ${S}/>`,
    page: `<path d="M1 2h7l3 3v6H1zM8 2v3h3" ${S}/>`,
    flag: '<path d="M3 2h5v8" fill="none" stroke="currentColor" stroke-width="2.500"/>',
    flagr: '<path d="M9 2H4v8" fill="none" stroke="currentColor" stroke-width="2.500"/>',
    punchin: `<path d="M2 1h8L6 6zM5 6h2v5H5z" ${F}/>`,
    punchout: `<path d="M5 1h2v5H5zM6 5l4 5H2z" ${F}/>`,
    cycle: '<path d="M4 9H3a3 3 0 0 1 0-6h6a3 3 0 0 1 0 6H7" fill="none" stroke="currentColor" stroke-width="1.700"/><path d="M8 6v6L4 9z" fill="currentColor"/>',
    stop: `<path d="M3 3h6v6H3z" ${F}/>`,
    play: `<path d="M3 2v8l7-4z" ${F}/>`,
    metro: `<path d="M2 11 4 3h4M2 11h7V6M5 8l5-7" ${S}/>`,
    count: `<path d="M1 10l2-7M5 9l3-6v8M10 3v8" ${S}/>`,
    click: `<path d="M2 1v10M4 6l5-4v8zM9 1v10" ${S}/>`
};

function icon(name) {
    return `<svg viewBox="0 0 12 12">${icons[name] || ''}</svg>`;
}

// repeatable random numbers so the parts always look the same
let seed = 7;
function rnd() {
    seed = (seed * 16807) % 2147483647;
    return seed / 2147483647;
}

// inspector sections
const sections = [
    ['TrackVersions', 'layers'], ['Chords', 'bars'], ['Expression Map', 'auto2'],
    ['Note Expression', 'cells'], ['MIDI Modifiers', 'block'], ['MIDI Inserts', 'pill'],
    null,
    ['Audio Inserts', 'pill', 1], ['Strip', 'pill'], ['Equalizers', 'diamond'],
    ['Audio Sends', 'zb'], ['Audio Fader', 'square'], 'setup',
    ['Notepad', 'block'], ['Quick Controls', 'knob', 1], 'setup'
];
document.getElementById('sections').innerHTML = sections.map(s => {
    if (s === null) {
        return '<div class="namebar"><span class="num"></span><span class="nm">Kontakt 5<i class="blk"></i><i data-icon="right"></i></span><i data-icon="edit"></i></div>';
    }
    if (s === 'setup') {
        return '<div class="setup"><u></u><i data-icon="gear"></i></div>';
    }
    return `<div><div class="sec">${s[0]}<i class="${s[2] ? 'blue' : ''}" data-icon="${s[1]}"></i></div></div>`;
}).join('');

// track list
const names = ['01', '02', '03', '04', '05', '06', '07', '08', '09', '10', '11', '12', '13', '14', '15',
    '02 (D)', '16', '16 (D)', '8out 01', '8out 02'];
const meters = {1: [10, 9], 2: [10, 9], 4: [12, 11], 7: [6, 9], 8: [9, 9], 12: [12, 12], 14: [10, 9], 16: [8, 9]};
document.getElementById('tracks').innerHTML = names.map((n, i) => `
    <div class="track ${i === 0 ? 'sel' : ''}">
        <div class="tnum"><i data-icon="piano"></i>${i + 1}</div>
        <div class="ms"><i>M</i><i>S</i></div>
        <div class="tbody">
            <div class="tname">Kontakt 5 ${n}</div>
            <div class="ctl"><span><i data-icon="dot"></i><i data-icon="spk"></i></span><span><i>e</i><i class="${i === 9 ? 'teal' : ''}" data-icon="keysw"></i></span><span><i>R</i><i>W</i></span><span><i data-icon="cells"></i></span></div>
        </div>
        <div class="meter">${(meters[i] || []).map(h => `<u style="height:${h}px"></u>`).join('')}</div>
    </div>`).join('');

// rulers
const BAR = 19.095, EBAR = 17.905;
function ruler(id, start, bar, last, loopEnd, cursor, hidden) {
    let html = `<div class="loop" style="left:${start}px;width:${loopEnd - start}px"></div>`;
    for (let b = 1; b <= last; b += 2) {
        const x = start + (b - 1) * bar;
        html += `<span class="${x < loopEnd ? 'in' : ''}" style="left:${x.toFixed(1)}px">${b === hidden ? '' : b}</span>`;
    }
    document.getElementById(id).innerHTML = html + `<div class="cursor" style="left:${cursor}px"></div>`;
}
ruler('ruler', 0, BAR, 53, 784, 404.7);
// bar 7 sits under the second part flag
ruler('edRuler', 148, EBAR, 55, 883.3, 527.5, 7);
document.getElementById('edRuler').innerHTML +=
    '<em style="left:197.500px">Bass Cl</em><em style="left:251.500px">Bass Cl</em>';

// note patterns: [step, note width, y list]; -1 is a rest
const patterns = {
    arp: [[2.4, 1.4, [13, 12, 11, 13, 8, 12, 13, 6, 11, 13, 9, 12]], [4.7, 1.3, [9, 5, 10, 4, 7, 3]]],
    bass: [[9.3, 1.1, [9, 11]], [9.3, 1.1, [-1, 5, 6, 5]]],
    bassHi: [[4.7, 1.1, [5, 8, 5, -1, 6, 4]]],
    stac: [[4.7, 1.7, [13, 12, -1, 12, 13]], [6, 1.3, [7, 4, -1, 6, 9]]],
    oboe: [[4.7, 2, [11, 11, 14, -1, 14]], [5.6, 1.5, [7, 4, 8, -1, 6]]],
    low: [[9.4, 1.5, [13, 12]], [11.3, 1.4, [11, 10]]],
    spic: [[4.7, 1.6, [12, 13, 11, 12, -1]], [9.4, 1.4, [9, 10, 8]]],
    wave: [[2.7, 2, [12, 13, 12, 12, 11, 10, 11, 12, 11, 10, 9, 8, 9, 10]]],
    line: [[5.2, 5.1, [8, 9, 8, 8, 9, 8]]],
    high: [[9.4, 1.3, [4]]],
    key: [[6.8, 2, [12, 13, 11, 12, 13]], [9, 1.2, [11, 13, 10]]],
    keyHi: [[5.7, 1, [7, 5, 9, -1, 6]], [11, 1, [7, 8]]],
    dots: [[4.7, 1.2, [13, 12]]],
    pizz: [[2.5, 1.6, [9]]],
    none: []
};
function notes(type, x0, x1) {
    let d = '';
    (patterns[type] || []).forEach(([step, w, ys]) => {
        let k = Math.floor(rnd() * ys.length);
        for (let x = x0 + 2; x < x1 - w; x += step, k++) {
            const y = ys[k % ys.length];
            const jitter = step > 3 && type !== 'line' ? Math.round(rnd() * 1.5) : 0;
            if (y > 0) d += `M${x.toFixed(1)} ${y + jitter}h${w}`;
        }
    });
    return d;
}

// [lane, left, right, colour, label, [[pattern, from, to]...], dividers, extra path]
const flute = 'M2 15.500h26M28 16.500h10M38 13.500h9M47 15.500h20M67 16.500h5M72 15.500h5M77 9h8';
const clips = [
    [0, 320, 402, 'blue', 'Bass Cl', [['arp', 324, 400]]],
    [0, 553.7, 633, 'blue', '', [['arp', 554, 632]]],
    [0, 783, 937.5, 'blue', '', [['arp', 784, 936]], [859.5]],
    [1, 324, 1014, 'pink', 'Double Bass', [['bass', 328, 360], ['bassHi', 370, 395], ['bass', 405, 435], ['bassHi', 435, 470], ['bass', 480, 510], ['bassHi', 512, 552], ['bass', 558, 630], ['bassHi', 585, 660], ['bass', 640, 790], ['bassHi', 740, 780], ['bassHi', 818, 855], ['bass', 860, 945], ['bassHi', 900, 934], ['bassHi', 970, 1012]], [401, 477, 553, 630, 706, 783, 859, 936]],
    [2, 396, 479, 'gold', 'Violin Staccato', [['low', 396, 436], ['stac', 438, 478]]],
    [2, 625, 708, 'gold', '', [['stac', 627, 706]]],
    [2, 783, 1013.5, 'gold', '', [['low', 784, 855], ['stac', 858, 936]], [856.7, 937.5], 'M155 9.500h35l2-2h38M163 10v2M185 10v2M200 8v2M215 8v2'],
    [3, 472.5, 555.5, 'cyan', 'Oboe', [['low', 474, 500], ['oboe', 490, 553]]],
    [3, 706, 861, 'cyan', '', [['oboe', 706, 860]], [783]],
    [4, 396, 480, 'red', 'Bassoon', [['dots', 398, 430], ['arp', 424, 478]]],
    [4, 630, 709, 'red', '', [['arp', 631, 707]]],
    [4, 857.5, 938.5, 'red', '', [['dots', 860, 936]]],
    [5, 477, 555.5, 'lime', 'Cello Spiccato', [['dots', 478, 520], ['arp', 514, 553]]],
    [5, 704, 783, 'lime', '', [['arp', 705, 781]]],
    [6, 477, 555.5, 'green', 'Viola', [['line', 495, 553]]],
    [6, 704, 861, 'green', '', [['line', 705, 781], ['low', 783, 860]], [782]],
    [7, 400.7, 487.5, 'violet', 'Flute whistle tone', [], [], flute],
    [7, 630, 716.5, 'violet', '', [], [], flute],
    [7, 859.5, 946, 'violet', '', [], [], flute],
    [8, 400.7, 785.5, 'orange', 'Cl Bb Key Noises', [['keyHi', 462, 552], ['key', 552, 784]], [552]],
    [8, 859, 1014, 'orange', '', [['keyHi', 861, 1012]]],
    [9, 352.7, 420, 'steel', 'lotosfloete', [], [], 'M1 15.500h52'],
    [10, 552.3, 633, 'gold', 'Violin Spicatto', [['wave', 552, 632]]],
    [11, 552.3, 632, 'white', 'Flute Staccato', [['dots', 553, 590], ['stac', 585, 630]]],
    [11, 934.5, 1014, 'white', '', [['low', 937, 1012]]],
    [12, 551.8, 709, 'green', 'Viola Pizz', [['pizz', 553, 628], ['spic', 629, 708], ['dots', 631, 706]], [629], 'M1 16.500h3M1 17.500h3M76 16.500h3M76 17.500h3M76 9h3M76 10h3M38 16.500h4M39 17.300h2'],
    [13, 477, 559, 'lime', 'Cello Glissandi', [], [], 'M43 4.500h34'],
    [13, 705, 783.5, 'lime', '', [], [], 'M4 8.500h35M40 4.500h37'],
    [13, 935, 1014.5, 'lime', '', [], [], 'M4 8.500h35M40 4.500h37'],
    [14, 324, 480.5, 'lime', 'Cello Spiccato', [['high', 365, 398], ['spic', 401, 479]], [400.7]],
    [14, 553.5, 786, 'lime', '', [['low', 558, 595], ['high', 596, 627], ['spic', 629, 740], ['low', 705, 745], ['high', 742, 782]], [628.5, 703]],
    [14, 859, 1014.5, 'lime', '', [['spic', 860, 938], ['low', 939, 975], ['high', 976, 1012]], [939]],
    [15, 477, 557.5, 'pink', 'Double Bass Spiccato', [], [], 'M67 5h1.500M76 8.500h1.500'],
    [15, 705, 787, 'pink', '', [['bass', 712, 785]]],
    [15, 934.5, 1014.5, 'pink', '', [['bass', 942, 1013]]],
    [16, 552, 861, 'white', 'Flute Secco', [['dots', 552, 704], ['bass', 708, 855]], [705.7]],
    [17, 778.5, 862, 'green', 'Viola Wood&nbsp; Knok', [], [], 'M52 6h1M55 6h1M58 6h1M61 6h1M64 6h1M67 6h1M70 6h1M73 6h1M76 6h1M79 6h1'],
    [18, 935.5, 1014, 'green', 'Viola Gettato', [], [], 'M42 11h4M52 11h4M61 11h4M71 11h4'],
    [19, 778.5, 974.5, 'gold', 'Violin Tremolo', [], [], 'M4 14.500h20M43 14.500h20M81 9h4M91 5h3M100 9h4M110 5h3M119 5h4M128 10h4M138 5h4M147 11h10l1-3']
];
const LEFT = 267.3;
let lanes = '';
for (let lane = 0; lane < 20; lane++) {
    lanes += '<div class="lane">';
    clips.filter(c => c[0] === lane).forEach(([, l, r, colour, label, segs, divs, extra]) => {
        let d = segs.map(s => notes(s[0], s[1] - l, s[2] - l)).join('');
        let svg = `<path d="${d}${extra || ''}" fill="none" stroke="#15152a" stroke-opacity=".6" stroke-width="1.2"/>`;
        if (colour === 'white' || colour === 'pink') svg = svg.replace('".6"', '".38"');
        if (colour === 'violet') svg = svg.replace('"1.2"', '"1.6"');
        if (lane === 9) svg = '<path d="M0 18V5h50v13z" fill="#5d6c85" opacity=".35"/>' + svg;
        if (lane === 19) {
            svg = '<path d="M1 20V10h14l8 6 14-5 10-5 16 5 6 4 14-4 12 1 62 4 4 4z" fill="#9d7420" opacity=".45"/>' +
                '<path d="M88 10v9M92 10v9M96 10v9M102 10v9M107 10v9M110 10v9M114 10v9M120 10v9M124 10v9M128 10v9M133 10v9M138 10v9M142 10v9" stroke="#a27a27" stroke-opacity=".5" stroke-width="2"/>' + svg;
        }
        (divs || []).forEach(x => {
            svg += `<path d="M${x - l} 0v20" stroke="#000" stroke-opacity="${colour === 'pink' ? .13 : .25}" stroke-width=".8"/>`;
        });
        lanes += `<div class="clip c-${colour}" style="left:${(l - LEFT).toFixed(1)}px;width:${(r - l).toFixed(1)}px"><svg width="${r - l}" height="20">${svg}</svg>${label ? `<b>${label}</b>` : ''}</div>`;
    });
    lanes += '</div>';
}
let lines = '';
for (let b = 0; b < 54; b += 2) {
    lines += `M${(b * BAR + .5).toFixed(1)} 0v421`;
}
document.getElementById('lanes').innerHTML =
    `<svg class="grid" width="1007" height="421"><path d="${lines}" stroke="#617286" stroke-opacity=".75"/></svg>` + lanes +
    '<div class="cursor" style="left:404.7px"></div>' +
    '<svg class="mouse" viewBox="0 0 7 10"><path d="M.5.500v8l2-1.500 1.200 2.500 1.300-.6L4 6.500h2.500z" fill="#fff" stroke="#222" stroke-width=".4"/></svg>';

// keyboard
let kb = '';
for (let o = 0; o < 3; o++) {
    [3, 8, 15, 20, 24.500].forEach(y => {
        kb += `<path d="M0 ${y + o * 28 - 1}h14v2.600H0z" fill="#55545c"/>`;
    });
    kb += `<path d="M14 ${1.500 + o * 28}h10M14 ${6 + o * 28}h10M14 ${11 + o * 28}h10M14 ${17 + o * 28}h10M14 ${23 + o * 28}h10" stroke="#8d8c94" stroke-width=".5"/>`;
    kb += `<text x="18" y="${15 + o * 28}" font-size="5" fill="#333">C${3 - o}</text>`;
}
document.getElementById('keys').innerHTML = `<svg width="24.300" height="72">${kb}</svg>`;

// piano roll and velocity lane, X and Y in page pixels
const OX = 119.3, OY = 566;
const px = x => (x - OX).toFixed(1);
const py = y => (y - OY).toFixed(1);
let fine = '', coarse = '';
for (let q = 0; q < 224; q++) {
    const x = 267.8 + q * EBAR / 4;
    if (q % 8 === 0) coarse += `M${px(x)} 0v113`;
    else fine += `M${px(x)} 0v113`;
}
let long = '';
[[393, 419, 575], [419, 428, 579], [428, 438, 573], [438, 455, 575], [456, 460, 578], [460, 500, 575], [501, 535, 577],
 [608, 625, 575], [625, 634, 579], [634, 643, 575], [643, 652, 573], [652, 662, 575], [662, 670, 579], [671, 715, 575],
 [716, 748, 577], [751, 769, 631], [787, 805, 631], [823, 849, 575], [849, 858, 579], [858, 867, 573], [867, 885, 575],
 [885, 890, 579], [890, 894, 575], [885, 894, 623], [895, 905, 619], [907, 928, 619], [930, 966, 623]
].forEach(([a, b, y]) => {
    long += `M${px(a)} ${py(y)}H${px(b)}`;
});
let dots = '';
function band(a, b, y, step, chance, jitter) {
    for (let x = a; x < b; x += step) {
        if (rnd() < chance) dots += `M${px(x)} ${py(y + Math.round((rnd() - .5) * jitter))}h${(1 + rnd()).toFixed(1)}`;
    }
}
band(393, 535, 585, 9, .9, 0);
band(394, 500, 595, 4.5, .6, 0);
band(393, 535, 619, 2.3, .6, 2);
band(393, 535, 615, 3, .55, 3);
band(458, 535, 623, 4, .4, 2);
band(393, 460, 631, 9, .5, 2);
band(502, 535, 606, 4, .8, 2);
band(536, 606, 577, 2.3, .75, 4);
band(560, 606, 569, 3, .8, 4);
band(536, 570, 585, 2.6, 1, 0);
band(536, 608, 618, 3, .7, 6);
band(560, 608, 629, 4, .5, 10);
band(608, 750, 603, 4.5, .45, 0);
band(608, 750, 595, 6, .4, 0);
band(608, 640, 585, 9, .9, 0);
band(608, 750, 619, 2.2, .8, 1);
band(608, 750, 614, 2.5, .6, 3);
band(640, 750, 623, 3, .5, 2);
band(650, 750, 631, 9, .3, 2);
band(716, 748, 605, 4, .7, 2);
band(751, 896, 615, 2.4, .75, 1);
band(751, 896, 619, 3, .7, 1);
band(751, 896, 603, 4.5, .4, 0);
band(751, 860, 591, 6, .5, 0);
band(790, 860, 585, 5, .6, 8);
band(758, 896, 631, 5, .5, 2);
band(858, 894, 595, 4.5, .8, 0);
band(858, 894, 585, 9, 1, 0);
band(895, 966, 575, 9, 1, 0);
band(920, 966, 567, 9, .8, 0);
band(895, 930, 631, 2, .8, 0);
band(930, 966, 631, 9, .8, 0);
band(920, 966, 615, 3, .7, 1);
band(930, 966, 619, 4.5, .8, 0);

function velocity(a, b, fill, top) {
    let s = `<path d="M${px(a)} ${py(656)}H${px(b)}V113H${px(a)}z" fill="${fill}"/>`;
    let d = '', gaps = '';
    for (let x = a; x < b - 1; x += 2.3) {
        d += `M${px(x + .8)} ${py(653.5 + rnd() * 2.5 - (Math.sin((x - a) / 12) + 1) * .7)}V${py(659)}`;
        gaps += `M${px(x + 2)} ${py(652)}V113`;
    }
    return s + `<path d="${d}" stroke="${top}" stroke-width="1.600"/><path d="${gaps}" stroke="#4b4f5a" stroke-opacity=".5" stroke-width=".6"/>`;
}
let black = '';
for (let y = 568; y < 638; y += 4.700) {
    black += `M${px(317)} ${py(y)}H${px(393)}`;
}
document.getElementById('roll').innerHTML = `<svg width="1148" height="113">
    <path d="M148 0h1000v113H148z" fill="#434c59"/>
    <path d="M${px(317)} 0H${px(393)}V72H${px(317)}z" fill="#353a45" opacity=".8"/>
    <path d="M${px(393)} 0H${px(896)}V72H${px(393)}z" fill="#3d3c48" opacity=".45"/>
    <path d="${fine}" stroke="#637080" stroke-opacity=".6" stroke-width=".8"/>
    <path d="${black}" stroke="#2b2f39" stroke-opacity=".7" stroke-width="1.500"/>
    <path d="${coarse}" stroke="#6b7784" stroke-opacity=".8"/>
    <path d="M0 14.500H1148M0 43.500H1148" stroke="#5f6b75" stroke-opacity=".6"/>
    <path d="M0 72.500H1148" stroke="#68757e"/>
    <path d="${dots}" stroke="#bd8f9b" stroke-width="1.200" stroke-opacity=".9"/>
    <path d="${long}" stroke="#b57f8d" stroke-width="1.300"/>
    ${velocity(319, 394.5, '#8a4661', '#b03a5d')}
    ${velocity(536, 610, '#a5a2a6', '#dedce0')}
    ${velocity(751, 897, '#a5a2a6', '#dedce0')}
</svg><div class="cursor" style="left:527.5px"></div>`;

document.querySelectorAll('[data-icon]').forEach(el => {
    el.innerHTML = icon(el.dataset.icon);
});
```
